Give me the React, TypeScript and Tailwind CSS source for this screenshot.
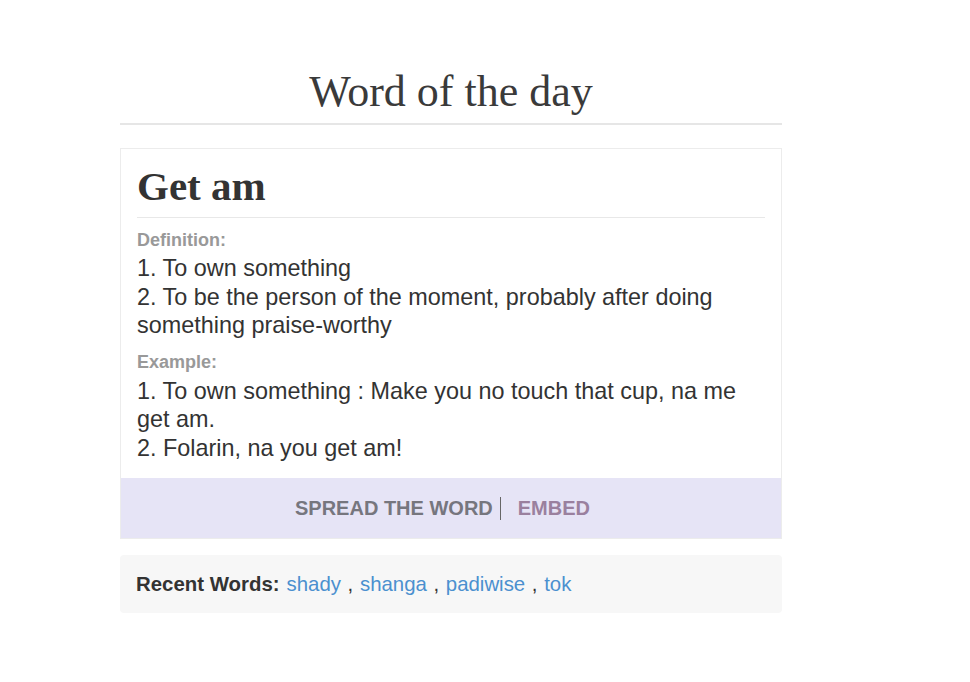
import type { FC } from 'react';

const serif = { fontFamily: '"Liberation Serif", "Times New Roman", serif' };
const sans = { fontFamily: '"Liberation Sans", Arial, sans-serif' };

const definitions = [
  'To own something',
  'To be the person of the moment, probably after doing something praise-worthy',
];

const examples = [
  'To own something : Make you no touch that cup, na me get am.',
  'Folarin, na you get am!',
];

const recent = ['shady', 'shanga', 'padiwise', 'tok'];

/**
 * Labelled numbered block (Definition / Example)
 */
const Section: FC<{ label: string; items: string[]; first?: boolean }> = ({
  label,
  items,
  first = false,
}) => (
  <div className={first ? 'mt-[11px]' : 'mt-[11px]'}>
    <div className="text-[18px] leading-[22px] font-bold text-[#999999]">{label}</div>
    <div
      className={`${first ? 'mt-[3px]' : 'mt-[4px]'} text-[23.4px] leading-[28.5px] text-[#333333]`}
    >
      {items.map((item, i) => (
        <div key={i}>
          {i + 1}. {item}
        </div>
      ))}
    </div>
  </div>
);

export default function App() {
  return (
    <div className="min-h-screen bg-white" style={sans}>
      <div className="ml-[120px] w-[662px] pt-[66px]">
        {/* Page title */}
        <div className="border-b-2 border-[#e6e6e6] pb-[5px]">
          <h1 className="text-center text-[44px] leading-[52px] text-[#3a3a3a]" style={serif}>
            Word of the day
          </h1>
        </div>

        {/* Word card */}
        <div className="mt-[23px] border border-[#ececec]">
          <div className="px-[16px] pt-[13px] pb-[16px]">
            <h2 className="text-[41px] leading-[48px] font-bold text-[#333333]" style={serif}>
              Get am
            </h2>
            <div className="mt-[7px] h-px bg-[#e8e8e8]" />
            <Section label="Definition:" items={definitions} first />
            <Section label="Example:" items={examples} />
          </div>
          <div className="flex h-[60px] items-center justify-center bg-[#e6e4f6] text-[20px] font-bold">
            <span className="text-[#76767e]">SPREAD THE WORD</span>
            <span className="ml-[7px] inline-block h-[23px] w-px bg-[#666666]" />
            <span className="mr-[17px] ml-[17px] text-[#9a809e]">EMBED</span>
          </div>
        </div>

        {/* Recent words */}
        <div className="mt-[16px] flex h-[58px] items-center rounded-[4px] bg-[#f7f7f7] pl-[16px] text-[20.4px] text-[#333333]">
          <span className="font-bold">Recent Words:</span>
          <span className="ml-[7px]">
            {recent.map((w, i) => (
              <span key={w}>
                <a className="text-[#4b90cf]" href="#">
                  {w}
                </a>
                {i < recent.length - 1 && <span className="mx-[1px]"> , </span>}
              </span>
            ))}
          </span>
        </div>
      </div>
    </div>
  );
}
